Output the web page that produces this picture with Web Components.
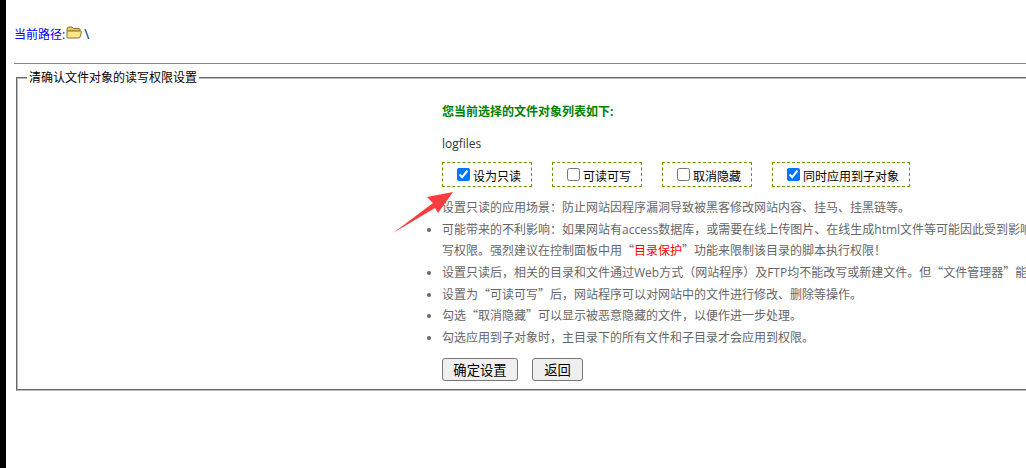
<!DOCTYPE html>
<html>
<head>
<meta charset="utf-8">
<style>
html { overflow: hidden; }
body { margin: 0; background: #fff; font-family: "Open Sans", "Noto Sans CJK SC", sans-serif; font-size: 12px; }
</style>
</head>
<body>
<file-page>
  <path-bar></path-bar>
  <perm-panel></perm-panel>
</file-page>
<script>
class FilePage extends HTMLElement {
    constructor(){
        super()
        this.attachShadow({mode: "open"})
        this.shadowRoot.innerHTML = `
        <style>
        :host { display: block; width: 1026px; height: 468px; border-left: 6px solid #000; box-sizing: border-box; padding: 26px 0 0 8px; overflow: hidden; position: relative; }
        hr { height: 0; border: 0; border-top: 1px solid #888; margin: 22px 0 0; width: 1100px; }
        </style>
        <slot name="top"></slot>
        <hr>
        <slot></slot>
        `
    }
    connectedCallback(){
        this.querySelector("path-bar").slot = "top"
    }
}
class PathBar extends HTMLElement {
    constructor(){
        super()
        this.attachShadow({mode: "open"})
        this.shadowRoot.innerHTML = `
        <style>
        :host { display: flex; align-items: center; height: 15px; color: #00f; font-size: 12px; }
        svg { margin: -3px 2px 0 1px; }
        b { font-weight: normal; color: #036; font-size: 14px; }
        </style>
        <span>当前路径:</span>
        <svg width="16" height="13" viewBox="0 0 16 13">
          <path d="M1 3 Q1 1 2.5 1 L6 1 L7.5 2.5 L13 2.5 Q14 2.5 14 3.5 L14 5 L1 5Z" fill="#e8c860" stroke="#8a7430"/>
          <path d="M1 11.5 L1 5 L14.5 5 Q15.5 5 15.5 6 L14 11 Q13.8 12 13 12 L2 12 Q1 12 1 11.5Z" fill="#fbe68a" stroke="#8a7430"/>
        </svg>
        <b>\\</b>
        `
    }
}
class PermPanel extends HTMLElement {
    constructor(){
        super()
        this.attachShadow({mode: "open"})
        this.shadowRoot.innerHTML = `
        <style>
        :host { display: block; margin: 7px 0 0 2px; width: 1100px; color: #000; }
        fieldset { margin: 0; padding: 18px 0 0; border: 2px groove #bbb; height: 320px; box-sizing: border-box; }
        legend { padding: 0 2px; margin-left: 9px; font-size: 12px; line-height: 14px; }
        .inner { padding-left: 424px; }
        h4 { margin: 0; font-size: 12px; line-height: 18px; color: #008000; }
        .file { margin-top: 14px; line-height: 18px; color: #333; }
        .opts { display: flex; gap: 20px; margin-top: 9px; }
        ul { margin: 10px 0 0; padding: 0; color: #666; list-style: none; }
        .q { font-family: "Noto Sans CJK SC", sans-serif; line-height: 0; }
        .btns { display: flex; gap: 14px; margin-top: 9px; }
        button { height: 23px; padding: 0; font: inherit; font-size: 13.33px; color: #000; background: #efefef; border: 1px solid #767676; border-radius: 3px; box-sizing: border-box; }
        </style>
        <fieldset>
          <legend>清确认文件对象的读写权限设置</legend>
          <div class="inner">
          <h4>您当前选择的文件对象列表如下:</h4>
          <div class="file">logfiles</div>
          <div class="opts">
            <opt-box checked style="width:90px">设为只读</opt-box>
            <opt-box style="width:90px">可读可写</opt-box>
            <opt-box style="width:90px">取消隐藏</opt-box>
            <opt-box checked style="width:138px">同时应用到子对象</opt-box>
          </div>
          <ul>
            <note-item plain>设置只读的应用场景：防止网站因程序漏洞导致被黑客修改网站内容、挂马、挂黑链等。</note-item>
            <note-item>可能带来的不利影响：如果网站有access数据库，或需要在线上传图片、在线生成html文件等可能因此受到影响<br>写权限。强烈建议在控制面板中用<span class="q">“</span><span style="color:#f00">目录保护</span><span class="q">”</span>功能来限制该目录的脚本执行权限！</note-item>
            <note-item>设置只读后，相关的目录和文件通过Web方式（网站程序）及FTP均不能改写或新建文件。但<span class="q">“</span>文件管理器<span class="q">”</span>能</note-item>
            <note-item>设置为<span class="q">“</span>可读可写<span class="q">”</span>后，网站程序可以对网站中的文件进行修改、删除等操作。</note-item>
            <note-item>勾选<span class="q">“</span>取消隐藏<span class="q">”</span>可以显示被恶意隐藏的文件，以便作进一步处理。</note-item>
            <note-item>勾选应用到子对象时，主目录下的所有文件和子目录才会应用到权限。</note-item>
          </ul>
          <div class="btns">
            <button style="width:76px">确定设置</button>
            <button style="width:51px">返回</button>
          </div>
          </div>
        </fieldset>
        <pointer-arrow></pointer-arrow>
        `
    }
}
class OptBox extends HTMLElement {
    constructor(){
        super()
        this.attachShadow({mode: "open"})
        const checked = this.hasAttribute("checked") ? "checked" : ""
        this.shadowRoot.innerHTML = `
        <style>
        :host { display: flex; align-items: center; box-sizing: border-box; height: 25px; padding: 2px 0 0 14px; border: 1px dashed #669900; font-size: 12px; color: #000; }
        input { margin: 0 3px 2px 0; width: 13px; height: 13px; accent-color: #0075ff; }
        </style>
        <input type="checkbox" ${checked}><slot></slot>
        `
    }
}
class NoteItem extends HTMLElement {
    constructor(){
        super()
        this.attachShadow({mode: "open"})
        this.shadowRoot.innerHTML = `
        <style>
        :host { display: block; position: relative; line-height: 21.67px; white-space: nowrap; }
        i { position: absolute; left: -15px; top: 9px; width: 4px; height: 4px; border-radius: 50%; background: #666; }
        </style>
        ${this.hasAttribute("plain") ? "" : "<i></i>"}<slot></slot>
        `
    }
}
class PointerArrow extends HTMLElement {
    constructor(){
        super()
        this.attachShadow({mode: "open"})
        this.shadowRoot.innerHTML = `
        <style>
        :host { position: absolute; left: 387px; top: 190px; width: 62px; height: 45px; }
        svg { display: block; }
        </style>
        <svg width="62" height="45" viewBox="0 0 62 45"><path d="M0 43 L40 13 L34 7 L60 2 L45 23 L42 18 Z" fill="#fc3d3d"/></svg>
        `
    }
}
customElements.define("file-page", FilePage)
customElements.define("path-bar", PathBar)
customElements.define("perm-panel", PermPanel)
customElements.define("opt-box", OptBox)
customElements.define("note-item", NoteItem)
customElements.define("pointer-arrow", PointerArrow)
</script>
</body>
</html>
